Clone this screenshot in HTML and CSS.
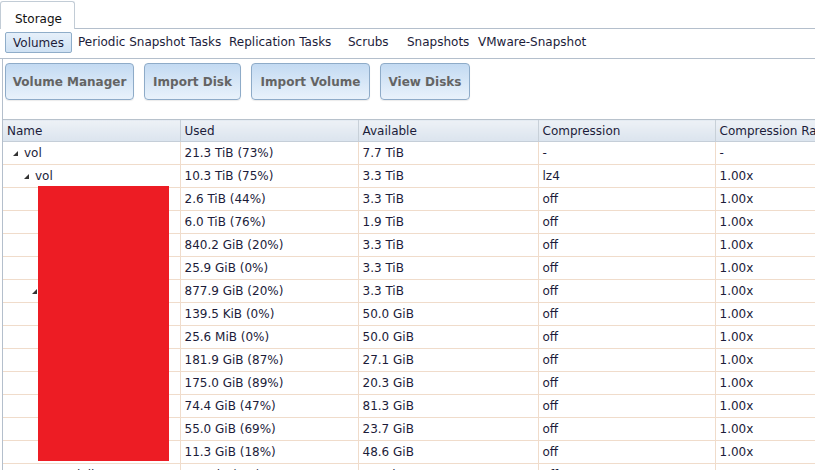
FILE: index.html
```html
<!DOCTYPE html>
<html>
<head>
<meta charset="utf-8">
<link rel="stylesheet" href="styles.css">
</head>
<body>
<div class="tabbar">
  <div class="tab">Storage</div>
</div>
<div class="subtabs">
  <span class="sub sel">Volumes</span>
  <span class="sub s1">Periodic Snapshot Tasks</span>
  <span class="sub s2">Replication Tasks</span>
  <span class="sub s3">Scrubs</span>
  <span class="sub s4">Snapshots</span>
  <span class="sub s5">VMware-Snapshot</span>
</div>
<div class="panel">
  <div class="buttons">
    <button class="btn b1">Volume Manager</button>
    <button class="btn b2">Import Disk</button>
    <button class="btn b3">Import Volume</button>
    <button class="btn b4">View Disks</button>
  </div>
  <div class="grid">
    <table>
      <colgroup><col class="c1"><col class="c2"><col class="c3"><col class="c4"><col class="c5"></colgroup>
      <thead>
        <tr><th>Name</th><th>Used</th><th>Available</th><th>Compression</th><th>Compression Ratio</th></tr>
      </thead>
      <tbody>
        <tr><td><span class="tw l0"></span>vol</td><td>21.3 TiB (73%)</td><td>7.7 TiB</td><td>-</td><td>-</td></tr>
        <tr><td><span class="tw l1"></span>vol</td><td>10.3 TiB (75%)</td><td>3.3 TiB</td><td>lz4</td><td>1.00x</td></tr>
        <tr><td></td><td>2.6 TiB (44%)</td><td>3.3 TiB</td><td>off</td><td>1.00x</td></tr>
        <tr><td></td><td>6.0 TiB (76%)</td><td>1.9 TiB</td><td>off</td><td>1.00x</td></tr>
        <tr><td></td><td>840.2 GiB (20%)</td><td>3.3 TiB</td><td>off</td><td>1.00x</td></tr>
        <tr><td></td><td>25.9 GiB (0%)</td><td>3.3 TiB</td><td>off</td><td>1.00x</td></tr>
        <tr><td><span class="tw l2"></span></td><td>877.9 GiB (20%)</td><td>3.3 TiB</td><td>off</td><td>1.00x</td></tr>
        <tr><td></td><td>139.5 KiB (0%)</td><td>50.0 GiB</td><td>off</td><td>1.00x</td></tr>
        <tr><td></td><td>25.6 MiB (0%)</td><td>50.0 GiB</td><td>off</td><td>1.00x</td></tr>
        <tr><td></td><td>181.9 GiB (87%)</td><td>27.1 GiB</td><td>off</td><td>1.00x</td></tr>
        <tr><td></td><td>175.0 GiB (89%)</td><td>20.3 GiB</td><td>off</td><td>1.00x</td></tr>
        <tr><td></td><td>74.4 GiB (47%)</td><td>81.3 GiB</td><td>off</td><td>1.00x</td></tr>
        <tr><td></td><td>55.0 GiB (69%)</td><td>23.7 GiB</td><td>off</td><td>1.00x</td></tr>
        <tr><td></td><td>11.3 GiB (18%)</td><td>48.6 GiB</td><td>off</td><td>1.00x</td></tr>
        <tr><td><span class="pad">jail</span></td><td>2.4 GiB (1%)</td><td>3.3 TiB</td><td>off</td><td>1.00x</td></tr>
      </tbody>
    </table>
  </div>
</div>
<div class="redact"></div>
</body>
</html>
```
FILE: styles.css
```css
html, body {
  margin: 0;
  padding: 0;
  background: #ffffff;
  width: 815px;
  height: 470px;
  overflow: hidden;
  font-family: "DejaVu Sans", Verdana, sans-serif;
  font-size: 12px;
  color: #1c1c3a;
}
.tabbar {
  height: 28px;
  border-bottom: 1px solid #b4bfcc;
  display: flex;
  align-items: flex-end;
}
.tab {
  box-sizing: border-box;
  width: 75px;
  height: 28px;
  margin-bottom: -1px;
  border: 1px solid #c2ccd6;
  border-bottom: none;
  border-radius: 3px 3px 0 0;
  background: #ffffff;
  display: flex;
  align-items: center;
  padding-left: 14px;
  padding-top: 6px;
  color: #111;
}
.subtabs {
  height: 29px;
  border-bottom: 1px solid #b4bfcc;
  position: relative;
}
.sub {
  position: absolute;
  top: 6px;
  white-space: nowrap;
}
.sub.sel {
  left: 5px;
  top: 3px;
  box-sizing: border-box;
  width: 67px;
  height: 21px;
  border: 1px solid #8fadc9;
  border-radius: 2px;
  background: linear-gradient(#e6f0fa, #cfe1f3);
  display: flex;
  align-items: center;
  justify-content: center;
}
.s1 { left: 78px; }
.s2 { left: 229px; }
.s3 { left: 348px; }
.s4 { left: 407px; }
.s5 { left: 478px; }
.panel {
  margin-left: 2px;
  border-left: 1px solid #b4bfcc;
  height: 420px;
}
.buttons {
  display: flex;
  gap: 10px;
  padding: 4px 0 0 2px;
  height: 60px;
  box-sizing: border-box;
}
.btn {
  box-sizing: border-box;
  height: 37px;
  border: 1px solid #8eabc8;
  border-radius: 4px;
  background: linear-gradient(#c3daf2, #e9f2fb);
  font-family: "DejaVu Sans", Verdana, sans-serif;
  font-size: 12px;
  font-weight: bold;
  color: #646464;
  padding: 1px 0 0 0;
  box-shadow: 0 1px 1px rgba(0,0,0,0.08);
}
.b1 { width: 129px; }
.b2 { width: 97px; }
.b3 { width: 119px; }
.b4 { width: 90px; }
.grid {
  overflow: hidden;
}
table {
  border-collapse: collapse;
  table-layout: fixed;
  width: 890px;
}
.c1 { width: 177px; }
.c2 { width: 178px; }
.c3 { width: 180px; }
.c4 { width: 177px; }
.c5 { width: 178px; }
th {
  height: 21px;
  padding: 0 0 0 4px;
  text-align: left;
  font-weight: normal;
  background: linear-gradient(#edf1f6, #dbe4ee);
  border-top: 1px solid #b8c2cc;
  border-bottom: 1px solid #c5ced8;
  border-left: 1px solid #c8d0d8;
  white-space: nowrap;
  overflow: hidden;
  color: #1c1c3a;
}
th:first-child { border-left: none; }
td {
  height: 22px;
  padding: 0 0 0 4px;
  border-bottom: 1px solid #f0dccb;
  border-left: 1px solid #f0dccb;
  white-space: nowrap;
  overflow: hidden;
}
td:first-child { border-left: none; }
.tw {
  display: inline-block;
  width: 0;
  height: 0;
  border-left: 5px solid transparent;
  border-bottom: 5px solid #333;
  margin-right: 6px;
  vertical-align: 1px;
}
.l0 { margin-left: 6px; }
.l1 { margin-left: 17px; }
.l2 { margin-left: 25px; }
.pad { padding-left: 70px; }
.redact {
  position: absolute;
  left: 38px;
  top: 186px;
  width: 131px;
  height: 275px;
  background: #ed1c24;
}
```
